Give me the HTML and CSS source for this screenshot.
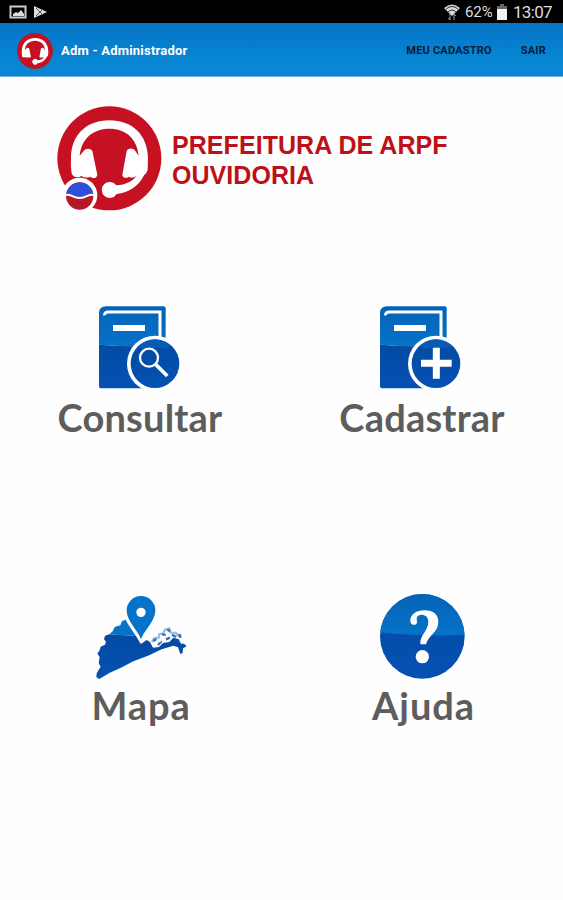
FILE: index.html
```html
<!DOCTYPE html>
<html lang="pt-BR">
<head>
    <meta charset="UTF-8">
    <title>Ouvidoria</title>
    <link rel="stylesheet" href="styles.css">
</head>
<body>
<svg class="defs" width="0" height="0">
    <defs>
        <linearGradient id="light" x1="0" y1="0" x2="0" y2="1">
            <stop offset="0" stop-color="#0562b6"/>
            <stop offset="1" stop-color="#0673c8"/>
        </linearGradient>
        <linearGradient id="dark" x1="0" y1="0" x2="0" y2="1">
            <stop offset="0" stop-color="#034ba2"/>
            <stop offset="1" stop-color="#0551b3"/>
        </linearGradient>
        <g id="headset">
            <circle cx="193" cy="190" r="156" fill="#c51122"/>
            <path d="M78 190C78 120 125 76 193 76C262 76 308 120 309 190L308 225Q305 236 297 241C282 272 252 294 215 297A24 24 0 1 1 214 271C242 269 262 260 274 243Q262 251 251 245C243 252 232 248 232 239L245 168C251 158 264 159 271 168L281 182C276 132 244 101 193 101C143 101 109 132 104 182L116 168C122 159 136 159 142 168L157 239C155 249 146 253 136 245Q122 251 109 243C98 250 86 247 80 236Q76 215 78 190Z" fill="#fff"/>
        </g>
        <g id="book">
            <path d="M147 52Q148 35 168 34H341Q347 34 347 40V152Q245 157 147 149Z" fill="url(#light)"/>
            <path d="M147 149Q245 157 347 152V280H155Q147 280 147 272Z" fill="url(#dark)"/>
            <path d="M164 61Q162 51 176 51H330V130" fill="none" stroke="#fff" stroke-width="9"/>
            <path d="M189 99H285" stroke="#fff" stroke-width="18"/>
            <path d="M315 206V281H350V206Z" fill="#fff"/>
            <circle cx="315" cy="206" r="84" fill="#fff"/>
            <circle cx="315" cy="206" r="73" fill="url(#dark)"/>
            <path d="M262 156A73 73 0 0 1 368 156Q315 162 262 156Z" fill="#055cb4"/>
        </g>
        <clipPath id="disc">
            <circle cx="190" cy="154" r="127"/>
        </clipPath>
    </defs>
</svg>

<div class="status">
    <svg class="status-left" width="40" height="16" viewBox="0 0 40 16">
        <path d="M1.5 2.5H16.5V13.5H1.5Z" fill="none" stroke="#ccc" stroke-width="2"/>
        <path d="M4 12V10L7 8L9 9L12 6L15 10V12Z" fill="#ddd"/>
        <path d="M25 2L38 8L25 14Z" fill="#ddd"/>
        <path d="M27 4L34 11M27 12L34 5" stroke="#555" stroke-width="1"/>
    </svg>
    <div class="status-right">
        <svg width="16" height="18" viewBox="0 0 16 18">
            <path d="M0 5Q8 -2 16 5L8 13Z" fill="#d8d8d8"/>
            <path d="M2 6Q8 1 14 6M4 9Q8 5 12 9" fill="none" stroke="#333" stroke-width="1"/>
            <path d="M6 11V17M10 17V11M4 15L6 17M12 13L10 11" fill="none" stroke="#999" stroke-width="1"/>
        </svg>
        <span class="percent">62%</span>
        <svg class="battery" width="10" height="16" viewBox="0 0 10 16">
            <path d="M3 0H7V2H10V5H0V2H3Z" fill="#666"/>
            <path d="M0 5H10V16H0Z" fill="#f2f2f2"/>
        </svg>
        <span class="clock">13:07</span>
    </div>
</div>

<div class="bar">
    <svg class="bar-logo" width="36" height="36" viewBox="36 33 314 314"><use href="#headset"/></svg>
    <span class="user">Adm - Administrador</span>
    <a class="link register">MEU CADASTRO</a>
    <a class="link">SAIR</a>
</div>

<div class="brand">
    <svg width="130" height="125" viewBox="0 0 390 375">
        <use href="#headset"/>
        <circle cx="104" cy="301" r="53" fill="#fff"/>
        <circle cx="104" cy="303" r="41" fill="#b51828"/>
        <path d="M64 297A41 41 0 0 1 145 297C132 291 126 306 104 306C82 306 76 291 64 297Z" fill="#2e4fdc"/>
        <path d="M62 300C76 294 82 309 104 309C126 309 132 294 146 300" fill="none" stroke="#fff" stroke-width="6"/>
    </svg>
    <h1 class="title">PREFEITURA DE ARPF<br>OUVIDORIA</h1>
</div>

<div class="menu">
    <div class="item">
        <svg width="180" height="100" viewBox="0 0 540 300">
            <use href="#book"/>
            <circle cx="297" cy="188" r="27" fill="none" stroke="#fff" stroke-width="7"/>
            <path d="M317 208L352 243" stroke="#fff" stroke-width="11"/>
        </svg>
        <span class="label">Consultar</span>
    </div>
    <div class="item">
        <svg width="180" height="100" viewBox="0 0 540 300">
            <use href="#book"/>
            <path d="M270 205H362M316 158V251" stroke="#fff" stroke-width="21"/>
        </svg>
        <span class="label cadastrar">Cadastrar</span>
    </div>
    <div class="item">
        <svg width="120" height="100" viewBox="0 0 360 300">
            <path d="M139 103L126 109L121 121L104 126L98 139L88 148Q125 152 168 151L140 108Z" fill="#0673c8"/>
            <path d="M88 148L75 152L72 163L78 170L75 179L62 185L58 198L52 205L59 217L56 234L62 245L50 265L49 277L58 282L88 264L126 247L160 229L204 212L245 193L280 182L294 187L301 207L308 204L309 190L320 184L312 176L303 176L296 163L280 158L268 171L249 174L237 186L219 188L210 171L200 165L184 176L168 151Q125 152 88 148Z" fill="url(#dark)"/>
            <path d="M216 172L222 160L236 158L238 147L250 146L255 134L268 130L272 143L288 144L294 152L304 150" fill="none" stroke="#9dbde0" stroke-width="7"/>
            <path d="M220 168L229 162M234 180L245 168M246 147L257 151M262 133L270 139M258 163L270 158M276 149L288 156M297 147L302 158" fill="none" stroke="#2f6fbc" stroke-width="7"/>
            <path d="M220 184L230 172M247 160L256 154M236 166L242 170" stroke="#fff" stroke-width="6"/>
            <path d="M184 174C170 143 134 109 134 77" fill="none" stroke="#fff" stroke-width="7"/>
            <path d="M183 162C171 133 140 108 140 76A43 43 0 0 1 226 76C226 108 195 133 183 162Z" fill="#0673c8"/>
            <circle cx="183" cy="82" r="14" fill="#fff"/>
        </svg>
        <span class="label mapa">Mapa</span>
    </div>
    <div class="item">
        <svg width="120" height="100" viewBox="6 0 360 300">
            <circle cx="190" cy="154" r="127" fill="url(#dark)"/>
            <path d="M60 20H320V150Q185 155 60 142Z" fill="url(#light)" clip-path="url(#disc)"/>
            <path d="M174 111C173 124 154 122 154 107C154 87 173 76 196 76C224 76 238 89 238 111C238 142 209 149 201 178H184C182 149 209 138 208 109C207 86 178 84 173 98Z" fill="#fff"/>
            <circle cx="190" cy="215" r="20" fill="#fff"/>
        </svg>
        <span class="label ajuda">Ajuda</span>
    </div>
</div>
</body>
</html>
```
FILE: styles.css
```css
* {
    padding: 0;
    margin: 0;
    box-sizing: border-box;
}

body {
    width: 563px;
    height: 900px;
    overflow: hidden;
    background: #fefefe;
    font-family: Roboto, "Liberation Sans", sans-serif;
}

svg {
    display: block;
    flex: none;
}

.defs {
    position: absolute;
}

.status {
    height: 23px;
    padding: 0 10px 0 9px;
    background: #000;
    color: #ddd;
    display: flex;
    justify-content: space-between;
    align-items: center;
}

.status-right {
    display: flex;
    align-items: center;
}

.percent {
    width: 29px;
    margin: 1px 3px 0 5px;
    font-size: 15px;
    letter-spacing: -0.1px;
}

.clock {
    width: 40px;
    margin: 1px 0 0 6px;
    font-size: 17px;
    letter-spacing: -0.7px;
}

.bar {
    height: 54px;
    padding: 2px 17px 0 17px;
    background: linear-gradient(#0674c6, #0788d5 80%, #0785d2);
    border-bottom: 1px solid #7ab5df;
    display: flex;
    align-items: center;
}

.user {
    margin-left: 8px;
    font-size: 13px;
    font-weight: bold;
    letter-spacing: 0.22px;
    color: #fff;
}

.link {
    font-size: 11px;
    font-weight: bold;
    letter-spacing: 0.2px;
    color: #051c35;
}

.register {
    margin-left: auto;
    margin-right: 29px;
}

.brand {
    height: 200px;
    padding: 18px 0 0 45px;
    display: flex;
}

.title {
    margin: 35px 0 0 -3px;
    font-family: "Liberation Sans", sans-serif;
    font-size: 25px;
    font-weight: bold;
    line-height: 30px;
    letter-spacing: 0.06px;
    color: #bd1018;
    white-space: nowrap;
}

.menu {
    padding-top: 18px;
    display: grid;
    grid-template-columns: 280px 282px;
    grid-template-rows: 290px 290px;
}

.item {
    display: flex;
    flex-direction: column;
    align-items: center;
}

.label {
    font-family: Lato, sans-serif;
    font-size: 38px;
    font-weight: bold;
    line-height: 44px;
    letter-spacing: 0.2px;
    color: #5d5d5d;
}

.cadastrar {
    padding-left: 2px;
}

.mapa {
    margin-top: -2px;
    padding-left: 2px;
    letter-spacing: 0.9px;
}

.ajuda {
    margin-top: -2px;
    padding-left: 5px;
    letter-spacing: 0.9px;
}
```
